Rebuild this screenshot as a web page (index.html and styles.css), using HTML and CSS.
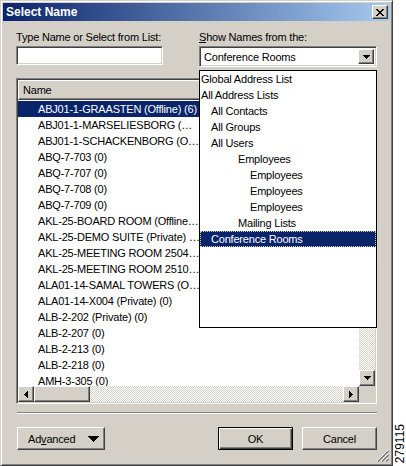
FILE: index.html
```html
<!DOCTYPE html>
<html>
<head>
<meta charset="utf-8">
<link rel="stylesheet" href="styles.css">
</head>
<body>
<div class="page">
  <div class="dialog">
    <div class="titlebar">
      <span class="title">Select Name</span>
      <span class="close raised"><svg width="8" height="7" viewBox="0 0 8 7" shape-rendering="crispEdges"><path d="M0 0h2v1H0z M6 0h2v1H6z M1 1h2v1H1z M5 1h2v1H5z M2 2h4v1H2z M3 3h2v1H3z M2 4h4v1H2z M1 5h2v1H1z M5 5h2v1H5z M0 6h2v1H0z M6 6h2v1H6z" fill="#000"/></svg></span>
    </div>
    <div class="content">
      <div class="toprow">
        <div class="field field-left">
          <div class="label">Type Name or Select from List:</div>
          <div class="input sunken"></div>
        </div>
        <div class="field field-right">
          <div class="label"><u>S</u>how Names from the:</div>
          <div class="combo sunken">
            <span class="combo-text">Conference Rooms</span>
            <span class="combo-btn raised"><svg width="7" height="4" viewBox="0 0 7 4" shape-rendering="crispEdges"><path d="M0 0h7v1H0z M1 1h5v1H1z M2 2h3v1H2z M3 3h1v1H3z" fill="#000"/></svg></span>
          </div>
          <div class="dropdown">
            <div class="dd-item lv0">Global Address List</div>
            <div class="dd-item lv0">All Address Lists</div>
            <div class="dd-item lv1">All Contacts</div>
            <div class="dd-item lv1">All Groups</div>
            <div class="dd-item lv1">All Users</div>
            <div class="dd-item lv2">Employees</div>
            <div class="dd-item lv3">Employees</div>
            <div class="dd-item lv3">Employees</div>
            <div class="dd-item lv3">Employees</div>
            <div class="dd-item lv2">Mailing Lists</div>
            <div class="dd-item lv1 dd-sel">Conference Rooms</div>
          </div>
        </div>
      </div>

      <div class="listframe sunken">
        <div class="listmain">
          <div class="header">
            <div class="hcell raised">Name</div>
            <div class="hrest raised"></div>
          </div>
          <div class="rows">
            <div class="row sel"><span class="cell">ABJ01-1-GRAASTEN (Offline) (6)</span></div>
            <div class="row"><span class="cell">ABJ01-1-MARSELIESBORG (Offline) (0)</span></div>
            <div class="row"><span class="cell">ABJ01-1-SCHACKENBORG (Offline) (0)</span></div>
            <div class="row"><span class="cell">ABQ-7-703 (0)</span></div>
            <div class="row"><span class="cell">ABQ-7-707 (0)</span></div>
            <div class="row"><span class="cell">ABQ-7-708 (0)</span></div>
            <div class="row"><span class="cell">ABQ-7-709 (0)</span></div>
            <div class="row"><span class="cell">AKL-25-BOARD ROOM (Offline) (0)</span></div>
            <div class="row"><span class="cell">AKL-25-DEMO SUITE (Private) (0)</span></div>
            <div class="row"><span class="cell">AKL-25-MEETING ROOM 2504 (Standard) (0)</span></div>
            <div class="row"><span class="cell">AKL-25-MEETING ROOM 2510 (Offline) (0)</span></div>
            <div class="row"><span class="cell">ALA01-14-SAMAL TOWERS (Offline) (0)</span></div>
            <div class="row"><span class="cell">ALA01-14-X004 (Private) (0)</span></div>
            <div class="row"><span class="cell">ALB-2-202 (Private) (0)</span></div>
            <div class="row"><span class="cell">ALB-2-207 (0)</span></div>
            <div class="row"><span class="cell">ALB-2-213 (0)</span></div>
            <div class="row"><span class="cell">ALB-2-218 (0)</span></div>
            <div class="row"><span class="cell">AMH-3-305 (0)</span></div>
          </div>
        </div>
        <div class="vscroll">
          <span class="sbtn raised"><svg width="7" height="4" viewBox="0 0 7 4" shape-rendering="crispEdges"><path d="M3 0h1v1H3z M2 1h3v1H2z M1 2h5v1H1z M0 3h7v1H0z" fill="#000"/></svg></span>
          <span class="vthumb raised"></span>
          <span class="track"></span>
          <span class="sbtn raised"><svg width="7" height="4" viewBox="0 0 7 4" shape-rendering="crispEdges"><path d="M0 0h7v1H0z M1 1h5v1H1z M2 2h3v1H2z M3 3h1v1H3z" fill="#000"/></svg></span>
        </div>
        <div class="hscroll">
          <span class="sbtn raised"><svg width="4" height="7" viewBox="0 0 4 7" shape-rendering="crispEdges"><path d="M3 0h1v7H3z M2 1h1v5H2z M1 2h1v3H1z M0 3h1v1H0z" fill="#000"/></svg></span>
          <span class="hthumb raised"></span>
          <span class="track"></span>
          <span class="sbtn raised"><svg width="4" height="7" viewBox="0 0 4 7" shape-rendering="crispEdges"><path d="M0 0h1v7H0z M1 1h1v5H1z M2 2h1v3H2z M3 3h1v1H3z" fill="#000"/></svg></span>
        </div>
        <div class="corner"></div>
      </div>

      <div class="sep"></div>

      <div class="buttons">
        <div class="btn raised adv">
          <span>Ad<u>v</u>anced</span>
          <svg class="adv-arrow" width="11" height="6" viewBox="0 0 11 6" shape-rendering="crispEdges"><path d="M0 0h11v1H0z M1 1h9v1H1z M2 2h7v1H2z M3 3h5v1H3z M4 4h3v1H4z M5 5h1v1H5z" fill="#000"/></svg>
        </div>
        <div class="btn ok">OK</div>
        <div class="btn raised cancel">Cancel</div>
      </div>
    </div>
    <svg class="grip" width="12" height="12" viewBox="0 0 12 12" shape-rendering="crispEdges">
      <path d="M11 0L0 11" stroke="#fff" stroke-width="1"/>
      <path d="M11 1L1 11 M12 1L1 12" stroke="#808080" stroke-width="1"/>
      <path d="M11 4L4 11" stroke="#fff" stroke-width="1"/>
      <path d="M11 5L5 11 M12 5L5 12" stroke="#808080" stroke-width="1"/>
      <path d="M11 8L8 11" stroke="#fff" stroke-width="1"/>
      <path d="M11 9L9 11 M12 9L9 12" stroke="#808080" stroke-width="1"/>
    </svg>
  </div>
  <div class="strip"><span class="fig">279115</span></div>
</div>
</body>
</html>
```

FILE: styles.css
```css
* { box-sizing: border-box; }
html, body { margin: 0; padding: 0; }
body {
  width: 406px;
  height: 466px;
  overflow: hidden;
  background: #fff;
  font-family: "Liberation Sans", Arial, sans-serif;
  font-size: 11px;
  letter-spacing: -0.2px;
  color: #000;
}
.page { display: flex; width: 406px; height: 466px; }

.raised {
  background: #d4d0c8;
  border: 1px solid;
  border-color: #fff #404040 #404040 #fff;
  box-shadow: inset -1px -1px #808080;
}
.sunken {
  border: 1px solid;
  border-color: #808080 #fff #fff #808080;
  box-shadow: inset 1px 1px #404040, inset -1px -1px #d4d0c8;
  background: #fff;
}

.dialog {
  position: relative;
  width: 393px;
  height: 466px;
  background: #d4d0c8;
  border: 1px solid;
  border-color: #d4d0c8 #404040 #404040 #d4d0c8;
  box-shadow: inset 1px 1px #fff, inset -1px -1px #808080;
  padding: 2px;
  display: flex;
  flex-direction: column;
}
.titlebar {
  height: 18px;
  flex: none;
  display: flex;
  align-items: center;
  padding: 0 2px 0 3px;
  background: linear-gradient(to right, #0a246a, #a6caf0);
}
.title {
  color: #fff;
  font-weight: bold;
  font-size: 12px;
  letter-spacing: 0;
}
.close {
  margin-left: auto;
  width: 16px;
  height: 14px;
  display: flex;
  align-items: center;
  justify-content: center;
}

.content {
  flex: 1;
  padding: 10px 13px 0;
  display: flex;
  flex-direction: column;
}
.toprow { display: flex; justify-content: space-between; }
.field-left { width: 147px; }
.field-right { width: 178px; position: relative; }
.label {
  height: 13px;
  line-height: 13px;
  margin-bottom: 2px;
  white-space: nowrap;
}
.input { height: 19px; }
.combo {
  height: 21px;
  display: flex;
  align-items: stretch;
  padding: 2px;
}
.combo-text { padding-left: 2px; line-height: 17px; white-space: nowrap; }
.combo-btn {
  margin-left: auto;
  width: 16px;
  display: flex;
  align-items: center;
  justify-content: center;
}

.dropdown {
  position: absolute;
  top: 39px;
  left: 0;
  width: 178px;
  height: 258px;
  background: #fff;
  border: 1px solid #000;
  z-index: 2;
}
.dd-item { height: 16px; line-height: 16px; white-space: nowrap; }
.lv0 { padding-left: 1px; }
.lv1 { padding-left: 11px; }
.lv2 { padding-left: 38px; }
.lv3 { padding-left: 50px; }
.dd-sel {
  background: #0a246a;
  color: #fff;
  outline: 1px dotted #d8d4a8;
  outline-offset: -1px;
}

.listframe {
  margin-top: 11px;
  height: 326px;
  padding: 1px;
  display: grid;
  grid-template-columns: 1fr 16px;
  grid-template-rows: 1fr 16px;
}
.listmain { overflow: hidden; background: #fff; min-width: 0; min-height: 0; }
.header { height: 20px; display: flex; }
.hcell {
  width: 184px;
  padding-left: 4px;
  line-height: 18px;
}
.hrest { flex: 1; }
.rows { padding-top: 1px; }
.row { height: 16px; line-height: 16px; display: flex; }
.row.sel { background: #0a246a; color: #fff; }
.cell {
  width: 182px;
  padding-left: 20px;
  overflow: hidden;
  white-space: nowrap;
  text-overflow: ellipsis;
}

.track {
  flex: 1;
  background-color: #d4d0c8;
  background-image: conic-gradient(#fff 0 25%, #d4d0c8 0 50%, #fff 0 75%, #d4d0c8 0);
  background-size: 2px 2px;
}
.sbtn {
  width: 16px;
  height: 16px;
  flex: none;
  display: flex;
  align-items: center;
  justify-content: center;
}
.vscroll { display: flex; flex-direction: column; min-height: 0; }
.vthumb { height: 24px; flex: none; }
.hscroll { display: flex; min-width: 0; }
.hthumb { width: 56px; flex: none; }
.corner { background: #d4d0c8; }

.sep {
  margin: 8px 0 0 1px;
  height: 2px;
  border-top: 1px solid #808080;
  border-bottom: 1px solid #fff;
}

.buttons {
  margin-top: 13px;
  height: 23px;
  display: flex;
}
.btn {
  height: 23px;
  display: flex;
  align-items: center;
  justify-content: center;
}
.adv {
  width: 88px;
  margin-left: 1px;
  justify-content: flex-start;
  padding-left: 10px;
}
.adv-arrow { margin-left: 13px; }
.ok {
  margin-left: auto;
  width: 75px;
  background: #d4d0c8;
  border: 1px solid #000;
  box-shadow: inset 1px 1px #fff, inset -1px -1px #404040, inset -2px -2px #808080;
}
.cancel { width: 75px; margin-left: 9px; }

.grip { position: absolute; right: 3px; bottom: 3px; }

.strip {
  flex: 1;
  display: flex;
  align-items: flex-end;
  justify-content: center;
  padding-bottom: 3px;
}
.fig {
  writing-mode: vertical-rl;
  transform: rotate(180deg);
  font-size: 12px;
  letter-spacing: 0;
  line-height: 12px;
}
```
